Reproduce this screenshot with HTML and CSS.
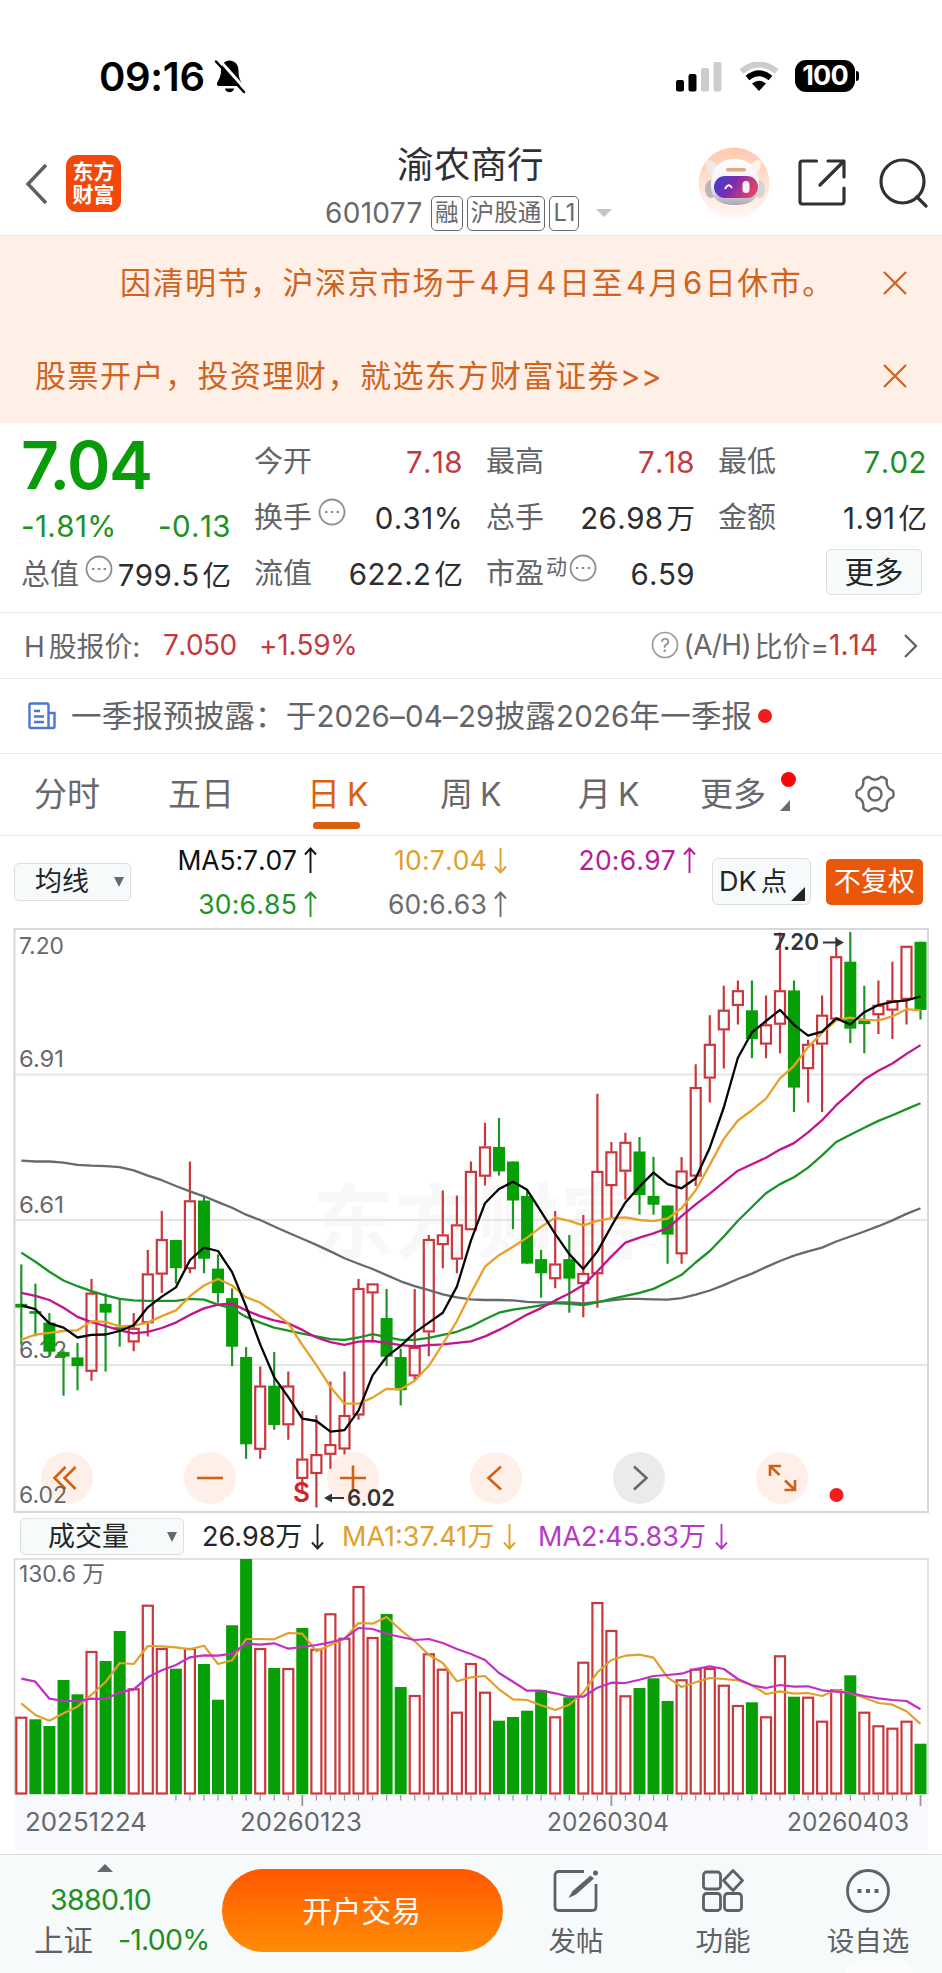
FILE: index.html
```html
<!DOCTYPE html>
<html lang="zh-CN">
<head>
<meta charset="utf-8">
<title>渝农商行 601077</title>
<link rel="stylesheet" href="styles.css">
</head>
<body>
<svg width="0" height="0" class="defs"><symbol id="down-arrow" viewBox="0 0 13 27"><path d="M6.500 1V25.500M1 19.500L6.500 25.500L12 19.500"/></symbol><symbol id="up-arrow" viewBox="0 0 13 27"><path d="M6.500 26V1.500M1 7.500L6.500 1.500L12 7.500"/></symbol></svg>
<div class="status">
  <div class="clock">09:16</div>
  <svg class="bell" width="32" height="35" viewBox="0 0 32 35"><path d="M15 1.5C9 2 7 7 7 12C7 19 3 22 3 25C3 26.500 4 27 5 27H27C28 27 28.500 26.500 28 25C27 22 24.500 20 24.500 12C24.500 6 22 2 15 1.500Z"/><path d="M11 29.500H20C19.500 34.500 11.500 34.500 11 29.500Z"/><path class="cut" d="M4.500 0L32 31"/><path class="slash" d="M2 2.500L30 33"/></svg>
  <svg class="signal" width="46" height="30" viewBox="0 0 46 30"><rect x="0" y="18" width="8" height="11.500" rx="2"/><rect x="12.500" y="12" width="8" height="17.500" rx="2"/><rect class="off" x="25" y="6" width="8" height="23.500" rx="2"/><rect class="off" x="37.500" y="0" width="8" height="29.500" rx="2"/></svg>
  <svg class="wifi" width="40" height="30" viewBox="0 0 40 30"><path class="far" d="M2.500 9.500Q20-4.500 37.500 9.500"/><path class="near" d="M8.500 16Q20 6.500 31.500 16"/><path d="M13 21.500Q20 16 27 21.500L20 29Z"/></svg>
  <div class="battery">100</div>
</div>

<header class="header">
  <svg class="back" width="26" height="44" viewBox="0 0 26 44"><path d="M22 3L4 22L22 41"/></svg>
  <div class="logo"><span>东方</span><span>财富</span></div>
  <div class="title">
    <h1>渝农商行</h1>
    <div class="code"><span class="num">601077</span><i>融</i><i>沪股通</i><i>L1</i><b></b></div>
  </div>
  <svg class="robot" width="74" height="74" viewBox="0 0 74 74">
    <defs>
      <linearGradient id="halo" x1="0" y1="0" x2="0" y2="1"><stop offset="0" stop-color="#ffc9ae"/><stop offset=".6" stop-color="#ffe6da"/><stop offset="1" stop-color="#fff8f5"/></linearGradient>
      <linearGradient id="visor" x1="0" y1="0" x2="1" y2=".3"><stop offset="0" stop-color="#3a3fd0"/><stop offset=".5" stop-color="#7d2cae"/><stop offset="1" stop-color="#e0406c"/></linearGradient>
      <linearGradient id="head" x1="0" y1="0" x2="0" y2="1"><stop offset="0" stop-color="#ffffff"/><stop offset=".6" stop-color="#f3eff3"/><stop offset="1" stop-color="#a9a7b2"/></linearGradient>
    </defs>
    <circle cx="37" cy="37" r="35.500" fill="url(#halo)"/>
    <path d="M9 15Q15 12 21 21L15 30Q8 24 9 15Z" fill="#efe9ec"/><path d="M64 15Q58 12 52 21L58 30Q64 24 64 15Z" fill="#fbf4f3"/>
    <ellipse cx="14" cy="43" rx="6" ry="9" fill="#b9b5bb"/><ellipse cx="63" cy="43" rx="5" ry="9" fill="#d9d2d5"/>
    <path d="M37 13C55 13 62 26 62 40C62 54 52 59 38 59C24 59 14 54 14 40C14 24 21 13 37 13Z" fill="url(#head)"/>
    <rect x="29" y="22" width="20" height="3.500" rx="1.500" fill="#e0aa83"/>
    <rect x="17" y="30" width="44" height="22" rx="11" fill="url(#visor)"/>
    <path d="M28 43Q31.500 36 35 42" fill="none" stroke="#fff" stroke-width="1.800"/><rect x="45.500" y="35" width="7" height="12" rx="3.500" fill="#f8eef8"/>
  </svg>
  <svg class="share" width="48" height="48" viewBox="0 0 48 48"><path d="M18.500 2H4.500Q2 2 2 4.500V42.500Q2 45 4.500 45H43.500Q46 45 46 42.500V29M30 2H46V18M45 3L22 26"/></svg>
  <svg class="find" width="50" height="50" viewBox="0 0 50 50"><circle cx="23.500" cy="23.500" r="21.500"/><path d="M38 39L47 48"/></svg>
</header>

<section class="notices">
  <div class="notice first"><span>因清明节，沪深京市场于<em>4</em>月<em>4</em>日至<em>4</em>月<em>6</em>日休市。</span><svg width="26" height="24" viewBox="0 0 26 24"><path d="M2 1L24 23M24 1L2 23"/></svg></div>
  <div class="notice second"><span>股票开户，投资理财，就选东方财富证券<em class="gt">&gt;&gt;</em></span><svg width="26" height="24" viewBox="0 0 26 24"><path d="M2 1L24 23M24 1L2 23"/></svg></div>
</section>

<section class="quote">
  <div class="main">
    <div class="price">7.04</div>
    <div class="change"><span>-1.81%</span><span>-0.13</span></div>
    <div class="pair tight"><label>总值</label><svg class="more-dot" viewBox="0 0 28 28"><circle cx="14" cy="14" r="12.500"/><path d="M7 14h2.500M12.800 14h2.500M18.600 14h2.500"/></svg><span>799.5<u>亿</u></span></div>
  </div>
  <div class="grid">
    <div class="pair"><label>今开</label><span class="up">7.18</span></div>
    <div class="pair"><label>最高</label><span class="up">7.18</span></div>
    <div class="pair"><label>最低</label><span class="down">7.02</span></div>
    <div class="pair"><label>换手</label><svg class="more-dot" viewBox="0 0 28 28"><circle cx="14" cy="14" r="12.500"/><path d="M7 14h2.500M12.800 14h2.500M18.600 14h2.500"/></svg><span>0.31%</span></div>
    <div class="pair"><label>总手</label><span>26.98<u>万</u></span></div>
    <div class="pair"><label>金额</label><span>1.91<u>亿</u></span></div>
    <div class="pair"><label>流值</label><span>622.2<u>亿</u></span></div>
    <div class="pair"><label>市盈</label><sup>动</sup><svg class="more-dot close" viewBox="0 0 28 28"><circle cx="14" cy="14" r="12.500"/><path d="M7 14h2.500M12.800 14h2.500M18.600 14h2.500"/></svg><span>6.59</span></div>
    <div class="pair"><button class="more">更多</button></div>
  </div>
</section>

<section class="hshare">
  <span class="lbl">H<em>股报价:</em></span><span class="red hk">7.050</span><span class="red pct">+1.59%</span>
  <span class="ratio"><svg width="28" height="28" viewBox="0 0 28 28"><circle cx="14" cy="14" r="12.500"/><text x="14" y="21" text-anchor="middle">?</text></svg><span class="ah">(A/H)</span><span class="bj">比价=</span><span class="red">1.14</span></span>
  <svg class="chev" width="15" height="24" viewBox="0 0 15 24"><path d="M2 1L13 12L2 23"/></svg>
</section>

<section class="news">
  <svg width="28" height="28" viewBox="0 0 28 28"><path d="M3 1.500H19Q20.500 1.500 20.500 3V26H3Q1.500 26 1.500 24.500V3Q1.500 1.500 3 1.500ZM20.500 11H26.500V24.500Q26.500 26 25 26H20M6 9H12M6 14.500H16M6 20H16"/></svg>
  <span>一季报预披露：于<em>2026–04–29</em>披露<em>2026</em>年一季报</span><i class="dot"></i>
</section>

<nav class="tabs">
  <span class="t1">分时</span><span class="t2">五日</span><span class="t3 on">日<em>K</em></span><span class="t4">周<em>K</em></span><span class="t5">月<em>K</em></span><span class="t6">更多<i></i><b></b></span>
  <svg class="gear" width="40" height="40" viewBox="0 0 40 40"><path d="M38 16.800Q39.200 20 38 23.200Q30.500 26 31.800 34Q30 36.600 26.300 37.200Q20 31.500 13.700 37.200Q10 36.600 8.200 34Q9.500 26 2 23.200Q.8 20 2 16.800Q9.500 14 8.200 6Q10 3.400 13.700 2.800Q20 8.500 26.300 2.800Q30 3.400 31.800 6Q30.500 14 38 16.800Z"/><circle cx="20" cy="20" r="6.500"/></svg>
</nav>

<section class="averages">
  <button class="pick">均线<i></i></button>
  <div class="ma"><span class="c5">MA5:7.07<svg class="arr"><use href="#up-arrow"/></svg></span><span class="c10">10:7.04<svg class="arr"><use href="#down-arrow"/></svg></span><span class="c20">20:6.97<svg class="arr"><use href="#up-arrow"/></svg></span><span class="c30">30:6.85<svg class="arr"><use href="#up-arrow"/></svg></span><span class="c60">60:6.63<svg class="arr"><use href="#up-arrow"/></svg></span></div>
  <button class="dk"><em>DK</em>点<i></i></button>
  <button class="adj">不复权</button>
</section>

<section class="kchart">
  <svg id="kline" width="942" height="588" viewBox="0 4 942 588"></svg>
  <div class="tools">
    <span class="tool"><svg viewBox="0 0 52 52"><path d="M24.500 15L13.500 26L24.500 37M34.500 15L23.500 26L34.500 37"/></svg></span>
    <span class="tool"><svg viewBox="0 0 52 52"><path d="M13 26H39"/></svg></span>
    <span class="tool"><svg viewBox="0 0 52 52"><path d="M13 26H39M26 13.500V38.500"/></svg></span>
    <span class="tool"><svg viewBox="0 0 52 52"><path d="M31 14.500L18.500 26L31 37.500"/></svg></span>
    <span class="tool gray"><svg viewBox="0 0 52 52"><path d="M21 14.500L33.500 26L21 37.500"/></svg></span>
    <span class="tool"><svg viewBox="0 0 52 52"><path d="M14 24V14H25M14 14L23.500 23M28.500 38H39V28M39 38L29 28.500"/></svg></span>
  </div>
</section>

<section class="volume-head">
  <button class="pick vol">成交量<i></i></button>
  <span class="v1">26.98万<svg class="arr"><use href="#down-arrow"/></svg></span><span class="v2">MA1:37.41万<svg class="arr"><use href="#down-arrow"/></svg></span><span class="v3">MA2:45.83万<svg class="arr"><use href="#down-arrow"/></svg></span>
</section>
<section class="vchart"><svg id="volume" width="942" height="292" viewBox="0 1 942 292"></svg></section>

<footer class="bottom">
  <div class="index"><b></b><div class="num">3880.10</div><div class="line"><span>上证</span><span class="num">-1.00%</span></div></div>
  <button class="trade">开户交易</button>
  <div class="act a1"><svg width="46" height="44" viewBox="0 0 46 44"><path d="M31 2.500H6Q2 2.500 2 6.500V37.500Q2 41.500 6 41.500H39Q43 41.500 43 37.500V15"/><path class="pen" d="M37.500 6.500L41 9.500L23 25.500L15.500 29L19.500 22Z"/><circle class="pen" cx="42.500" cy="4" r="2.500"/></svg><span>发帖</span></div>
  <div class="act a2"><svg width="42" height="44" viewBox="0 0 42 44"><rect x="1.500" y="3" width="17" height="17" rx="3"/><rect x="1.500" y="24.500" width="17" height="17" rx="3"/><rect x="22.500" y="24.500" width="17" height="17" rx="3"/><path d="M31 1.500L40.500 11.500L31 21.500L21.500 11.500Z"/></svg><span>功能</span></div>
  <div class="act a3"><svg width="44" height="44" viewBox="0 0 44 44"><circle cx="22" cy="22" r="20.500"/><path class="dots" d="M11.500 22h4M20 22h4M28.500 22h4"/></svg><span>设自选</span></div>
  <i class="mark"></i>
</footer>
<script src="chart.js"></script>
</body>
</html>
```
FILE: styles.css
```css
* { box-sizing: border-box; }
body { margin: 0; width: 942px; height: 1973px; overflow: hidden; background: #fff; color: #2b2d30; font-family: Inter, "Noto Sans CJK SC", sans-serif; }
svg { display: block; flex: none; }
button { font: inherit; padding: 0; margin: 0; display: block; }
em, i, u { font-style: normal; text-decoration: none; }
span { white-space: nowrap; }
.defs { position: absolute; }
.num { letter-spacing: -0.03em; }
.red { color: #c23a3f; }
.arr { display: inline-block; width: 13px; height: 27px; margin-left: 7px; vertical-align: -4px; fill: none; stroke: currentColor; stroke-width: 1.900; }

.status { height: 120px; padding: 59px 0 0 99px; display: flex; align-items: flex-start; }
.clock { width: 115px; font-size: 40px; line-height: 35px; font-weight: 600; letter-spacing: -0.3px; color: #000; }
.bell .cut { stroke: #fff; stroke-width: 3; }
.bell .slash { stroke: #000; stroke-width: 2.5; stroke-linecap: round; }
.signal { margin: 3px 0 0 430px; }
.signal .off { fill: #ccc; }
.wifi { margin: 3px 0 0 17px; fill: #000; }
.wifi .far { fill: none; stroke: #ccc; stroke-width: 6; }
.wifi .near { fill: none; stroke: #000; stroke-width: 6; }
.battery { position: relative; width: 60px; height: 32px; margin: 1px 0 0 16px; border-radius: 11px; background: #000; color: #fff; font-size: 27px; font-weight: 700; line-height: 32px; text-align: center; letter-spacing: -0.8px; }
.battery::after { content: ""; position: absolute; left: 61px; top: 11px; width: 3px; height: 10px; background: #000; border-radius: 0 3px 3px 0; }

.header { height: 116px; border-bottom: 1px solid #e9e9e9; display: flex; align-items: flex-start; }
.back { margin: 42px 0 0 24px; }
.back path { fill: none; stroke: #606164; stroke-width: 3.5; }
.logo { width: 55px; height: 57px; margin: 35px 0 0 16px; padding-top: 5px; border-radius: 11px; background: #f2480c; color: #fff; font-size: 21px; line-height: 23px; font-weight: 700; text-align: center; }
.logo span { display: block; }
.title { width: 420px; margin: 22px 0 0 139px; }
.title h1 { margin: 0 0 0 137px; font-size: 36.7px; line-height: 46px; font-weight: 400; color: #2f3033; }
.code { display: flex; align-items: center; height: 36px; margin: 7px 0 0 65px; color: #67686b; font-size: 28px; }
.code .num { width: 106px; line-height: 36px; letter-spacing: 0.3px; }
.code i { height: 35px; margin-right: 4px; padding: 0 3px; border: 1.5px solid #67686b; border-radius: 5px; font-size: 23.600px; line-height: 32px; }
.code b { margin-left: 13px; border: 8px solid transparent; border-top: 8px solid #c5c5c7; border-bottom: 0; }
.robot { margin: 26px 0 0 17px; }
.share { margin: 39px 0 0 27px; }
.find { margin: 38px 0 0 33px; }
.share path, .find * { fill: none; stroke: #303134; stroke-width: 3.2; stroke-linecap: round; stroke-linejoin: round; }

.notices { height: 187px; background: #feefe7; color: #d0641f; }
.notice { display: flex; align-items: center; }
.notice span { font-size: 31px; letter-spacing: 1.5px; line-height: 40px; }
.notice em { padding: 0 2.500px 0 2px; letter-spacing: 0; }
.notice .gt { padding: 0; letter-spacing: 0.5px; }
.notice svg { margin: 0 34px 0 auto; }
.notice path { stroke: #d0641f; stroke-width: 2.3; }
.first { height: 93px; padding-left: 120px; }
.second { height: 94px; padding-left: 35px; }

.quote { height: 190px; display: flex; border-bottom: 1px solid #e9e9e9; font-size: 29.500px; font-kerning: none; }
.main { width: 231px; padding: 8px 0 0 21px; }
.price { height: 69px; font-size: 66px; line-height: 69px; font-weight: 600; letter-spacing: -1.500px; color: #0a9b0a; font-kerning: normal; }
.change { display: flex; justify-content: space-between; height: 53px; line-height: 53px; color: #218f24; letter-spacing: 0.4px; }
.grid { margin-left: 23px; width: 673px; padding-top: 11px; display: grid; grid-template-columns: 209px 209px 209px; column-gap: 23px; grid-auto-rows: 56px; }
.pair { position: relative; display: flex; align-items: center; height: 56px; line-height: 56px; }
.pair label { color: #636467; font-size: 29px; }
.pair > span { margin-left: auto; letter-spacing: 0.4px; }
.pair u { margin-left: 3px; font-size: 28.500px; letter-spacing: 0; }
.pair .up { color: #c23a3f; }
.pair .down { color: #218f24; }
.pair sup { font-size: 21px; line-height: 40px; margin: -14px 0 0 2px; color: #636467; }
.more-dot { width: 28px; height: 28px; margin: -12px 0 0 6px; fill: none; stroke: #8d8e90; stroke-width: 1.800; }
.more-dot.close { margin-left: 2px; }
.tight .more-dot { margin-left: 6px; }
.tight { margin-top: -6px; }
.more { width: 96px; height: 46px; margin: -4px 5px 0 auto; border: 1.500px solid #dcdfe1; border-radius: 5px; background: #f7fafb; color: #232528; font-size: 29.500px; line-height: 42px; }

.hshare { height: 66px; padding-left: 24px; border-bottom: 1px solid #e9e9e9; display: flex; align-items: center; font-size: 28px; color: #67686b; font-kerning: none; }
.hshare > span, .ratio span { margin-top: -1px; }
.hshare .lbl { width: 139px; }
.hshare .lbl em { margin-left: 4px; letter-spacing: -0.2px; }
.hshare .hk { width: 96px; letter-spacing: -0.5px; }
.hshare .pct { letter-spacing: -0.2px; }
.ratio { margin-left: auto; display: flex; align-items: center; }
.ratio svg { margin-right: 5px; fill: none; stroke: #9a9b9d; stroke-width: 1.700; }
.ratio text { font-size: 19px; fill: #8d8e90; stroke: none; }
.ratio .ah { width: 71px; letter-spacing: -0.6px; }
.ratio .red { letter-spacing: 0; }
.chev { margin: 0 24px 0 25px; fill: none; stroke: #606164; stroke-width: 2.300; }

.news { height: 75px; padding-left: 28px; border-bottom: 1px solid #e9e9e9; display: flex; align-items: center; font-size: 30.500px; color: #636467; }
.news svg { fill: none; stroke: #4d76d0; stroke-width: 2.400; }
.news > span { margin: -5px 0 0 15px; letter-spacing: 0.18px; }
.news em { font-size: 29.500px; }
.dot { width: 14px; height: 14px; margin-left: 6px; border-radius: 50%; background: #f01e1e; }

.tabs { position: relative; height: 82px; border-bottom: 1px solid #e3e9ea; display: grid; grid-template-columns: 134px 139px 133px 138px 122px 156px 40px; align-items: center; padding-left: 34px; font-size: 33px; line-height: 81px; color: #67686b; }
.tabs em { margin-left: 7px; font-size: 32px; }
.tabs .on { position: relative; color: #d9600f; }
.tabs .on::after { content: ""; position: absolute; left: 6px; bottom: 6px; width: 47px; height: 7px; border-radius: 3px; background: #d9600f; }
.t6 { position: relative; }
.t6 i { position: absolute; left: 81px; top: 18px; width: 15px; height: 15px; border-radius: 50%; background: #f50808; }
.t6 b { position: absolute; left: 80px; top: 46px; border-left: 10px solid transparent; border-bottom: 11px solid #6a6b6e; }
.gear { margin: -2px 0 0 -1px; fill: none; stroke: #67686b; stroke-width: 2.400; stroke-linejoin: round; }

.averages { height: 92px; display: flex; align-items: flex-start; padding: 3px 0 0 14px; }
.pick { width: 117px; height: 38px; margin-top: 24px; padding: 0 6px 0 20px; display: flex; align-items: center; justify-content: space-between; border: 1.500px solid #dcdfe1; border-radius: 5px; background: #f7fafb; color: #232528; font-size: 27px; line-height: 34px; }
.pick i { border: 5.500px solid transparent; border-top: 10px solid #67686b; border-bottom: 0; }
.ma { width: 567px; margin-top: -1px; display: grid; grid-template-columns: 186px 190px 189px; grid-auto-rows: 44px; text-align: right; font-size: 26.500px; line-height: 44px; letter-spacing: 0.2px; font-kerning: none; }
.c5 { color: #111; } .c10 { color: #dfa02c; } .c20 { color: #b51e95; } .c30 { color: #229326; } .c60 { color: #6b6c6f; }
.c5 { letter-spacing: -0.1px; }
.dk { position: relative; width: 99px; height: 47px; margin: 19px 0 0 14px; border: 1.500px solid #dcdfe1; border-radius: 6px; background: #f7fafb; color: #232528; font-size: 26.500px; line-height: 43px; text-align: left; padding-left: 6px; }
.dk em { margin-right: 4px; font-size: 27px; }
.dk i { position: absolute; right: 5px; bottom: 3px; border-left: 14px solid transparent; border-bottom: 14px solid #232528; }
.adj { width: 97px; height: 46px; margin: 20px 0 0 15px; border: 0; border-radius: 5px; background: #ea560a; color: #fff; font-size: 27px; line-height: 46px; }

.kchart { position: relative; height: 588px; }
#kline { position: relative; z-index: 1; }
.tools { position: absolute; left: 41px; top: 524px; display: flex; gap: 91px; }
.tool { width: 52px; height: 52px; border-radius: 50%; background: #fef0e8; }
.tool svg { width: 52px; height: 52px; fill: none; stroke: #cf6016; stroke-width: 2.600; }
.tool.gray { background: #ebebeb; }
.tool.gray svg { stroke: #67686b; }
.axis { font-size: 23px; fill: #67686b; }
.axis.date { font-size: 25px; }
.tag { font-size: 23px; font-weight: 600; fill: #333437; }
.tag.sell { font-size: 27px; fill: #d82227; }
.water { font-size: 82px; font-weight: 700; fill: #f8f8f8; }

.volume-head { height: 42px; padding: 2px 0 0 20px; display: flex; align-items: flex-start; font-size: 27px; line-height: 38px; }
.pick.vol { width: 164px; height: 37px; margin: 0; padding: 0 6px 0 27px; }
.volume-head .arr { margin-left: 9px; }
.v1 { margin-left: 18px; width: 140px; color: #232528; }
.v2 { width: 196px; color: #dfa02c; }
.v3 { color: #b43bc4; }
.vchart { height: 296px; }

.bottom { position: relative; height: 119px; border-top: 1.500px solid #dcdddf; background: #f6fafb; display: flex; align-items: flex-start; color: #606164; font-size: 27.500px; }
.index { width: 188px; margin-left: 34px; padding-top: 9px; }
.index b { display: block; width: 0; margin-left: 63px; border: 8px solid transparent; border-bottom: 8px solid #67686b; border-top: 0; }
.index > .num { height: 55px; margin-left: 16px; line-height: 55px; font-size: 28.500px; letter-spacing: -0.6px; color: #218f24; }
.index .line { display: flex; height: 26px; line-height: 26px; font-size: 29.500px; }
.index .line .num { margin-left: 25px; font-size: 28.500px; letter-spacing: -0.8px; color: #218f24; }
.trade { width: 281px; height: 83px; margin: 14px 0 0 0; padding-right: 2px; border: 0; border-radius: 42px; background: linear-gradient(#ff5700, #ff8d05); color: #fff; font-size: 29.700px; line-height: 82px; }
.act { padding-top: 14px; text-align: center; }
.act svg { margin: 0 auto; fill: none; stroke: #606164; stroke-width: 2.800; stroke-linejoin: round; overflow: visible; }
.act .pen { fill: #606164; stroke: none; }
.act .dots { stroke-width: 4; }
.act span { display: block; margin-top: 15px; line-height: 26px; }
.a1 { width: 70px; margin-left: 38px; }
.a2 { width: 70px; margin-left: 77px; }
.a3 { width: 90px; margin-left: 65px; }
.mark { position: absolute; left: 846px; top: 106px; width: 66px; height: 30px; border-radius: 12px; background: #fbfdfd; }
```
FILE: chart.js
```js
const STEP = 14.05, X0 = 21.3, K = 1 / 2.613;
const kx = i => +(X0 + STEP * i).toFixed(1);
const RED = '#c8383c', GREEN = '#06a006';

// [direction, high, body top, body bottom, low]
const candles = `g 900 1003 1013 1110|g 950 1022 1029 1088|g 1027 1052 1128 1142|g 1125 1129 1141 1243|g 1105 1143 1166 1229|r 938 974 1180 1204|g 976 1003 1026 1180|g 988 1064 1067 1115|r 1027 1066 1103 1127|r 862 924 1053 1088|r 760 834 926 975|g 836 836 910 950|r 631 733 912 923|g 723 733 885 923|g 874 911 975 1000|g 963 988 1115 1166|g 1116 1142 1370 1408|r 1167 1217 1384 1408|g 1129 1217 1320 1332|r 1180 1217 1320 1358|r 1283 1408 1460 1500|r 1294 1396 1447 1535|r 1206 1370 1397 1434|r 1180 1294 1383 1396|r 938 962 1294 1306|r 950 950 975 1100|g 964 1040 1141 1166|g 1120 1142 1229 1268|r 964 1116 1192 1204|r 823 834 1077 1140|r 707 822 849 910|r 720 796 887 923|r 631 656 810 810|r 530 592 670 694|g 517 593 657 668|g 631 631 733 808|g 705 721 898 898|g 862 886 923 987|r 760 898 938 962|g 823 886 937 1026|r 771 923 951 1038|r 454 656 925 1013|r 580 605 695 780|r 556 580 657 730|g 567 605 719 770|g 619 721 744 770|g 746 746 822 898|r 619 655 873 898|r 377 437 670 695|r 249 324 414 477|r 172 235 288 388|r 158 184 224 273|g 158 236 311 361|r 197 273 325 361|r 33 184 273 348|g 158 184 438 502|r 313 324 389 477|r 197 248 325 502|r 45 95 260 260|g 31 109 284 322|g 172 262 272 348|r 158 222 248 298|r 109 210 236 311|r 68 68 208 273|g 57 57 235 260`.split('|').map(s => s.split(' ').map((v, i) => i ? v * K - 4 : v));

const averages = [
  ['#68696b', '629 631 631 634 640 642 643 646 654 668 680 695 709 722 737 752 770 784 801 817 833 849 866 884 898 912 928 944 957 967 978 986 991 993 993 994 998 999 999 999 1002 998 994 990 990 991 992 988 979 968 954 938 924 907 891 877 866 856 840 827 814 800 785 768 753'],
  ['#189324', '869 893 919 942 957 970 981 990 994 995 995 995 990 992 1005 1015 1037 1052 1065 1073 1081 1088 1095 1097 1091 1082 1090 1097 1097 1092 1084 1076 1062 1043 1026 1018 1013 1007 1001 1003 1006 999 990 982 974 964 946 927 895 865 827 786 750 714 690 672 647 615 580 561 543 525 510 494 479'],
  ['#c4148c', '974 982 993 1013 1037 1051 1061 1072 1080 1076 1066 1052 1032 1015 1005 1002 1020 1035 1046 1054 1071 1091 1103 1110 1102 1100 1105 1111 1114 1111 1109 1105 1101 1088 1071 1052 1031 1014 994 976 954 918 879 843 830 819 805 774 743 715 685 655 638 621 600 583 555 523 484 451 417 394 375 350 327'],
  ['#e9a02a', '1097 1083 1079 1074 1072 1048 1050 1062 1060 1052 1035 1020 983 955 938 955 986 1000 1025 1054 1110 1163 1220 1264 1264 1248 1225 1226 1204 1165 1108 1048 975 906 876 854 830 802 778 786 798 786 779 777 784 787 780 753 706 640 572 524 497 467 414 381 332 295 262 255 261 262 252 233 236'],
  ['#050505', '1007 1017 1054 1065 1091 1084 1083 1074 1059 1012 984 960 889 856 865 920 1010 1109 1195 1247 1303 1309 1337 1333 1282 1190 1141 1113 1078 1052 1026 958 838 740 703 684 705 762 820 873 912 866 800 738 696 660 690 701 675 595 490 360 294 264 235 274 302 292 257 273 241 222 214 210 200']
];

const line = (ys, f, color, w) => `<polyline points="${ys.split(' ').map((v, i) => kx(i) + ',' + f(+v).toFixed(1)).join(' ')}" fill="none" stroke="${color}" stroke-width="${w}" stroke-linejoin="round"/>`;
const label = (x, y, w, s, cls = 'axis') => `<text class="${cls}" x="${x}" y="${y}" textLength="${w}" lengthAdjust="spacingAndGlyphs">${s}</text>`;

let k = `<text class="water" x="312" y="328" textLength="330">东方财富</text>`;
for (const y of [150.6, 296, 441]) k += `<path d="M14.5 ${y}H928" stroke="#e6e6e7" stroke-width="2"/>`;
k += '<path d="M14.5 5H928V588H14.5Z" fill="none" stroke="#d6d8d9" stroke-width="2"/>';
k += label(19, 30, 45, '7.20') + label(19, 143, 45, '6.91') + label(19, 289, 45, '6.61') + label(19, 434, 48, '6.32') + label(19, 579, 48, '6.02');
candles.forEach(([d, h, t, b, l], i) => {
  const x = kx(i), y = v => v.toFixed(1);
  if (d === 'r') {
    k += `<path d="M${x} ${y(h)}V${y(t)}M${x} ${y(b)}V${y(l)}" stroke="${RED}" stroke-width="2.200"/>`;
    k += `<rect x="${(x - 5).toFixed(1)}" y="${y(t + .8)}" width="10" height="${Math.max(b - t - 1.6, 2).toFixed(1)}" fill="none" stroke="${RED}" stroke-width="2.200"/>`;
  } else {
    k += `<path d="M${x} ${y(h)}V${y(l)}" stroke="#1f9527" stroke-width="2.200"/>`;
    k += `<rect x="${(x - 6).toFixed(1)}" y="${y(t)}" width="12" height="${Math.max(b - t, 2).toFixed(1)}" fill="${GREEN}"/>`;
  }
});
averages.forEach(([c, ys]) => { k += line(ys, v => v * K - 4, c, 2.3); });
k += label(773, 26, 46, '7.20', 'tag') + '<path d="M823 18.500H838" stroke="#333437" stroke-width="2"/><path d="M836 14L844 18.500L836 23Z" fill="#333437"/>';
k += label(347, 582, 48, '6.02', 'tag') + '<path d="M330 574H344" stroke="#333437" stroke-width="2"/><path d="M332 569.500L324 574L332 578.500Z" fill="#333437"/>';
k += label(293, 578, 17, 'S', 'tag sell');
k += '<circle cx="836.5" cy="571" r="7" fill="#f01e1e"/>';
document.getElementById('kline').innerHTML = k;

// Volume bars: r = rising, g = falling, followed by the bar's top
const vols = 'r620 g628 g648 g510 g553 r423 g453 g363 r535 r284 r414 g476 r414 g462 g569 g346 g147 r414 g474 r474 g354 r416 r310 r383 r228 r381 g312 g531 r555 r430 r476 r605 r459 r545 g632 g621 g602 g540 r619 g562 r455 r276 r360 r556 g534 g505 g573 r508 r476 r474 r524 r585 g577 r619 r436 g560 r560 r632 r538 g496 r605 r646 r653 r632 g701'.split(' ');
const vy = v => v / 3 - 47;
let v = '<rect x="14.5" y="237" width="913.5" height="56" fill="#f8f9fc"/><path d="M14.5 237V2H928V237" fill="none" stroke="#d6d8d9" stroke-width="1.600"/>';
v += label(19, 25, 86, '130.6 万');
vols.forEach((s, i) => {
  const x = kx(i), t = vy(+s.slice(1)), long = [20, 42, 64].includes(i);
  v += s[0] === 'r'
    ? `<rect x="${(x - 5).toFixed(1)}" y="${(t + 1).toFixed(1)}" width="10" height="${(235.5 - t).toFixed(1)}" fill="#fff" stroke="${RED}" stroke-width="2.200"/>`
    : `<rect x="${(x - 6).toFixed(1)}" y="${t.toFixed(1)}" width="12" height="${(237.2 - t).toFixed(1)}" fill="${GREEN}"/>`;
  if (i > 10) v += `<path d="M${x} 238V${long ? 249 : 243.5}" stroke="#96979a" stroke-width="${long ? 1.8 : 1.2}"/>`;
});
v += line('580 615 632 610 590 554 516 459 462 408 409 412 418 407 462 451 387 387 388 369 371 424 405 386 339 341 321 360 394 434 459 514 502 498 538 568 570 586 600 584 548 487 450 437 434 443 502 531 517 504 507 511 526 552 544 551 549 558 539 550 563 579 584 604 642', vy, '#dfa02c', 2.2);
v += line('506 515 566 573 573 566 567 547 538 502 481 465 442 436 437 431 400 404 400 416 411 405 397 386 354 357 371 381 390 387 399 417 432 450 489 515 542 542 550 560 560 533 518 519 509 498 495 491 477 469 477 507 526 534 525 530 529 541 545 549 558 565 570 573 598', vy, '#c22fc6', 2.2);
[[25, '20251224'], [240, '20260123'], [547, '20260304'], [787, '20260403']].forEach(([x, s]) => { v += label(x, 274, 122, s, 'axis date'); });
document.getElementById('volume').innerHTML = v;
```
